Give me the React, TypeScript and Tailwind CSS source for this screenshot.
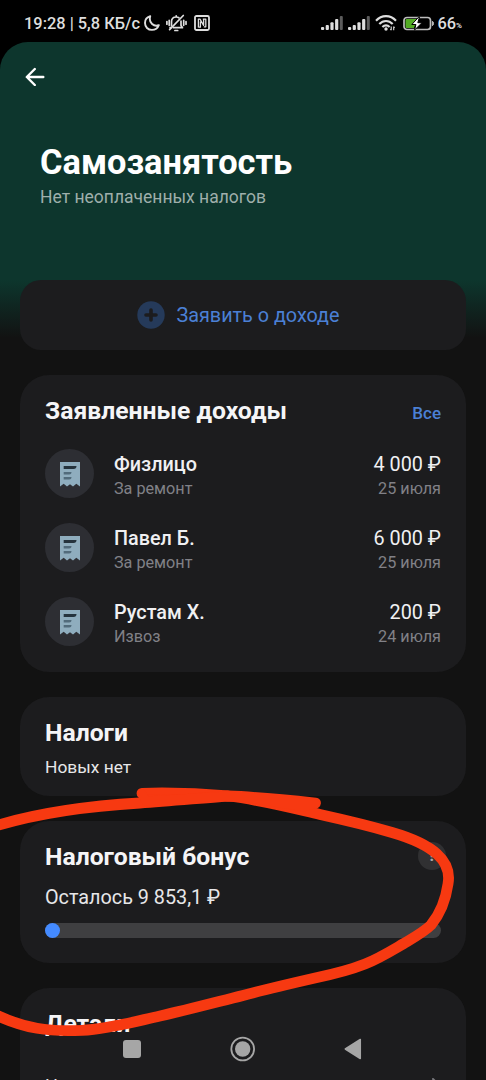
import React from 'react';

interface Income {
  id: number;
  name: string;
  purpose: string;
  amount: string;
  date: string;
}

const incomes: Income[] = [
  { id: 1, name: 'Физлицо', purpose: 'За ремонт', amount: '4 000 ₽', date: '25 июля' },
  { id: 2, name: 'Павел Б.', purpose: 'За ремонт', amount: '6 000 ₽', date: '25 июля' },
  { id: 3, name: 'Рустам Х.', purpose: 'Извоз', amount: '200 ₽', date: '24 июля' },
];

const SignalIcon = () => (
  <svg width="22" height="14" viewBox="0 0 22 14" fill="#dedede">
    <rect x="0" y="11" width="3.2" height="3" rx="1" />
    <rect x="4.7" y="9" width="3.2" height="5" rx="1" />
    <rect x="9.4" y="6.3" width="3.2" height="7.7" rx="1" />
    <rect x="14.1" y="3" width="3.2" height="11" rx="1" />
    <rect x="18.8" y="0" width="3" height="14" rx="1" fill="#5c5c5c" />
  </svg>
);

const StatusBar = () => (
  <div className="flex h-[42px] items-center pt-[4px] pr-[24px] pl-[24px] text-[#dedede]">
    <span className="w-[119px] pt-[2px] text-[16.4px] leading-5 font-medium whitespace-nowrap">19:28 | 5,8 КБ/с</span>
    {/* луна */}
    <svg className="ml-px" width="16" height="16" viewBox="0 0 16 16" fill="none" stroke="currentColor" strokeWidth="1.9" strokeLinejoin="round">
      <path d="M6.2 1.2C2.9 2.2 1 4.8 1 8c0 4 3 6.9 6.9 6.9 3.2 0 5.9-1.9 6.9-4.7C10.3 12.2 4.3 8.1 6.2 1.2Z" />
    </svg>
    {/* без звука */}
    <svg className="ml-[6px]" width="21" height="18" viewBox="0 0 21 18" fill="none" stroke="currentColor" strokeWidth="1.7" strokeLinecap="round" strokeLinejoin="round">
      <path d="M5.5 11.8V7.8C5.5 5 7.3 3 10.2 3c1 0 2 .3 2.7.8M15 7v4.5l1.5 2.2H7.5M10.2 3V1.8M4 13.7h.6" />
      <path d="M17.3 1.5 3.6 15.6" />
      <path d="M8.9 16.5h2.8M3.2 6.3v5M.9 7.6v2.6M17.7 6.3v5M20 7.6v2.6" />
    </svg>
    {/* NFC */}
    <svg className="ml-[7px]" width="16" height="16" viewBox="0 0 16 16" fill="none" stroke="currentColor" strokeWidth="1.8" strokeLinejoin="round">
      <rect x="1" y="1" width="14" height="14" rx="1.5" />
      <path d="M4.4 12.6V4.2H6L9.6 10.4V4.2M8.8 4.2H11.8V11.8H9.8M6.4 6.5V12.2H4.4" strokeWidth="1.3" />
    </svg>
    <div className="ml-auto flex items-center">
      <SignalIcon />
      <span className="w-[5px]" />
      <SignalIcon />
      <svg className="ml-[5px]" width="22" height="16" viewBox="0 0 22 16" fill="none" stroke="currentColor" strokeWidth="2.1">
        <path d="M1 5.7C6.6-.4 15.4-.4 21 5.7" />
        <path d="M4.3 9C8.2 4.9 13.8 4.9 17.7 9" />
        <path d="M7.4 12.1c2.2-2.3 5-2.3 7.2 0" />
        <circle cx="11" cy="14" r="1.7" fill="currentColor" stroke="none" />
        <path d="M16.2 11.6v3.7M18.7 11.6v3.7M15.3 14l1 1.2M19.6 12.9l-1-1.2" strokeWidth="1.1" />
      </svg>
      <svg className="ml-[6px]" width="32" height="15" viewBox="0 0 32 15">
        <rect x="1" y="1.5" width="26.5" height="12" rx="3" fill="none" stroke="#bdbdbd" strokeWidth="1.7" />
        <path d="M4 3h10l-3 9H4c-1 0-1.5-.5-1.5-1.5v-6C2.500 3.500 3 3 4 3Z" fill="#53ac24" />
        <path d="M15.8 1 8.8 8.5h4.1L11.6 14 19 6.7h-4.2L16.5 1Z" fill="#fff" stroke="#000" strokeWidth="1" />
        <path d="M29.4 5.3c1.5.6 1.5 3.8 0 4.4Z" fill="#bdbdbd" stroke="#bdbdbd" />
      </svg>
      <span className="ml-[2px] pt-[2px] text-[16.4px] leading-5 font-medium">66</span>
      <span className="pt-[6px] text-[8px] leading-3 font-bold">%</span>
    </div>
  </div>
);

const ReceiptIcon = () => (
  <div className="flex size-[49px] shrink-0 items-center justify-center rounded-full bg-[#2d2e33]">
    <svg className="mt-[2px]" width="20" height="25" viewBox="0 0 20 25">
      <path d="M0 0h20v24.5L16.3 21.7 13 24.5 10 22.3 7 24.5 3.7 21.7 0 24.5Z" fill="#8fadbe" />
      <path d="M3.7 4h12.8c0 2-1 3-3 3H3.7Z" fill="#25333d" />
      <path d="M3.7 10h7.8c0 1.7-.8 2.5-2.3 2.5H3.7ZM3.7 15h7.8c0 1.7-.8 2.5-2.3 2.5H3.7Z" fill="#526b7b" />
    </svg>
  </div>
);

const IncomeRow: React.FC<{ income: Income }> = ({ income }) => (
  <div className="flex h-[49px] items-center">
    <ReceiptIcon />
    <div className="mt-[4px] ml-[20px] flex-1">
      <div className="text-[19.8px] leading-[25px] font-medium text-[#f0f0f2]">{income.name}</div>
      <div className="text-[16.2px] leading-[23px] text-[#818187]">{income.purpose}</div>
    </div>
    <div className="mt-[4px] text-right">
      <div className="text-[19.8px] leading-[25px] text-[#f0f0f2]">{income.amount}</div>
      <div className="text-[16.2px] leading-[23px] text-[#818187]">{income.date}</div>
    </div>
  </div>
);

// Пометка красным маркером поверх экрана
const MarkerStroke = () => (
  <svg className="pointer-events-none absolute inset-0" width="486" height="1080" viewBox="0 0 486 1080" fill="none" stroke="#f73911" strokeWidth="10.8" strokeLinecap="round" strokeLinejoin="round">
    <path d="M142 793.3C170 792.5 200 793.5 228 796C262 800 292 808 320 814.5C345 820 370 826 392 832.5C411 838 427 845 437 854C447 863 450 873 448 884C446 898 440 914 431 925C424 932 413 938 403 944C391 951 378 959 365 964C350 970 334 974 315 978C291 983.5 267 989 243 995.5C215 1002.5 187 1010 160 1016C133 1022 108 1029 82 1030.3C50 1032 24 1029-8 1013" />
    <path d="M-8 827C40 812 88 806 140 803C170 801 201 798 228 796C258 797 287 800 315.5 803" />
    <path d="M142 794 146 801 228 796 315 803.5 304 807 238 796" fill="#f73911" strokeWidth="9" />
  </svg>
);

const NavBar = () => (
  <div className="absolute bottom-0 left-0 flex h-[62px] w-full items-center">
    <div className="ml-[123px] h-[18px] w-[18px] rounded-[3px] bg-[#a6a6a6]" />
    <svg className="ml-[89px]" width="26" height="26" viewBox="0 0 26 26">
      <circle cx="12.7" cy="13" r="11.4" fill="none" stroke="#a6a6a6" strokeWidth="1.8" />
      <circle cx="12.7" cy="13" r="7.7" fill="#a6a6a6" />
    </svg>
    <svg className="ml-[88px]" width="18" height="22" viewBox="0 0 18 22">
      <path d="M1.3 11 16.3 1.5v19Z" fill="#a6a6a6" stroke="#a6a6a6" strokeWidth="1.5" strokeLinejoin="round" />
    </svg>
  </div>
);

export default function App() {
  return (
    <div className="relative h-[1080px] w-[486px] overflow-hidden bg-black font-['Roboto','Noto_Sans',sans-serif]">
      <StatusBar />
      <div className="h-[1100px] rounded-t-[28px] bg-[linear-gradient(#0d362d_0px,#0d362d_238px,#121212_296px,#121212_100%)]">
        <div className="h-[238px] pt-[24px]">
          <svg className="ml-[25px]" width="20" height="20" viewBox="0 0 20 20" fill="none" stroke="#fff" strokeWidth="2.4" strokeLinecap="round" strokeLinejoin="round">
            <path d="M18.3 11H2M9.8 3 1.8 11l8 8" />
          </svg>
          <h1 className="mt-[55px] ml-[40px] text-[34.4px] leading-[42px] font-bold text-white">Самозанятость</h1>
          <p className="mt-px ml-[40px] text-[17.5px] leading-[26px] text-[#9fafab]">Нет неоплаченных налогов</p>
        </div>

        <div className="flex flex-col px-[20px]">
          <button className="flex h-[70px] items-center justify-center rounded-[21px] bg-[#1c1c1e] pr-[9px]">
            <svg width="28" height="28" viewBox="0 0 28 28">
              <circle cx="14" cy="14" r="13.7" fill="#253a5a" />
              <path d="M14 9v10M9 14h10" stroke="#1c1c1e" strokeWidth="3.6" strokeLinecap="round" />
            </svg>
            <span className="ml-[11px] pt-[2px] text-[19.8px] leading-[26px] text-[#4b80d5]">Заявить о доходе</span>
          </button>

          <section className="mt-[25px] h-[297px] rounded-[29px] bg-[#1c1c1e] px-[25px] pt-[20px]">
            <div className="flex items-center justify-between">
              <h2 className="text-[24.7px] leading-[32px] font-bold text-[#f5f5f7]">Заявленные доходы</h2>
              <span className="pt-[4px] text-[17px] leading-6 font-medium text-[#4b80d5]">Все</span>
            </div>
            <div className="mt-[22px] flex flex-col gap-[25px]">
              {incomes.map((income) => (
                <IncomeRow key={income.id} income={income} />
              ))}
            </div>
          </section>

          <section className="mt-[25px] h-[99px] rounded-[29px] bg-[#1c1c1e] px-[25px] pt-[20px]">
            <h2 className="text-[24.7px] leading-[32px] font-bold text-[#f5f5f7]">Налоги</h2>
            <p className="mt-[5px] text-[17.4px] leading-[26px] text-[#e7e7e9]">Новых нет</p>
          </section>

          <section className="mt-[25px] h-[142px] rounded-[29px] bg-[#1c1c1e] px-[25px] pt-[20px]">
            <div className="flex h-[32px] items-center justify-between">
              <h2 className="text-[24.7px] leading-[32px] font-bold text-[#f5f5f7]">Налоговый бонус</h2>
              <span className="mt-[-2px] mr-[-5px] flex size-[28px] items-center justify-center rounded-full bg-[#303032] text-[17px] font-bold text-[#a8a8aa]">?</span>
            </div>
            <p className="mt-[12px] text-[19.8px] leading-[26px] text-[#e7e7e9]">Осталось 9 853,1 ₽</p>
            <div className="mt-[12px] h-[15px] rounded-full bg-[#3f3f41]">
              <div className="size-[15px] rounded-full bg-[#448aff]" />
            </div>
          </section>

          <section className="mt-[25px] h-[170px] rounded-[29px] bg-[#1c1c1e] px-[25px] pt-[20px]">
            <h2 className="text-[24.7px] leading-[32px] font-bold text-[#f5f5f7]">Детали</h2>
            <div className="mt-[33px] flex items-start justify-between text-[18px] leading-[26px] text-[#e7e7e9]">
              <span>Н</span>
              <svg className="mt-[4px]" width="12" height="18" viewBox="0 0 12 18" fill="none" stroke="#77777c" strokeWidth="2" strokeLinecap="round">
                <path d="M4 2l7 7-7 7" />
              </svg>
            </div>
          </section>
        </div>
      </div>
      <NavBar />
      <MarkerStroke />
    </div>
  );
}
